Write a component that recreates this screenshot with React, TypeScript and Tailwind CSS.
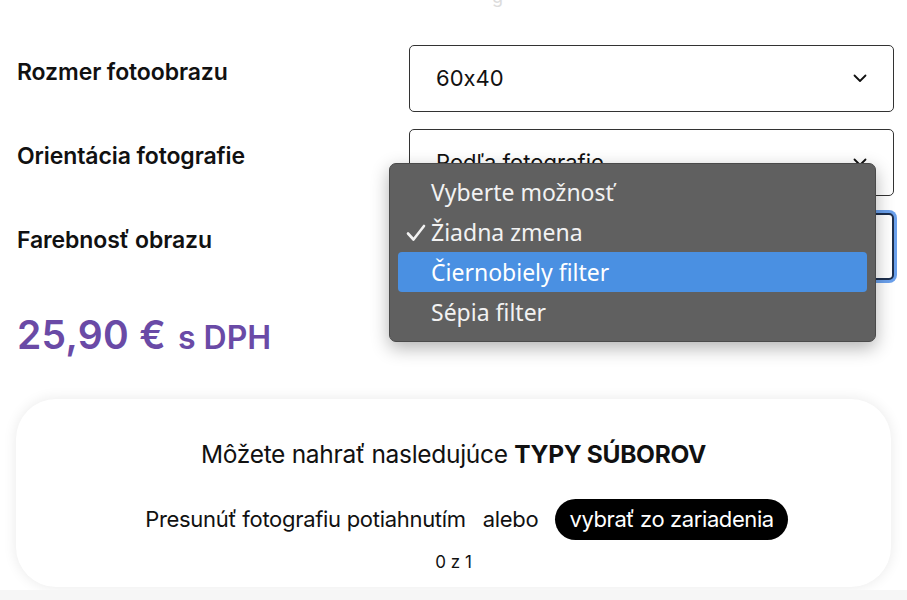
import React from 'react'

const font = { fontFamily: 'Inter, "Noto Sans", sans-serif' }

function Chevron() {
  return (
    <svg width="14" height="9" viewBox="0 0 14 9" fill="none" className="shrink-0">
      <path d="M1.5 1.5 7 7l5.5-5.5" stroke="#111" strokeWidth="1.8" strokeLinecap="round" strokeLinejoin="round" />
    </svg>
  )
}

function Field({ label, value, focused, children }: { label: string; value: string; focused?: boolean; children?: React.ReactNode }) {
  return (
    <div className="flex items-center h-[67px]">
      <div className="w-[392px] shrink-0 -mt-[12px] text-[23px] font-semibold text-[#111] tracking-[-0.1px]">{label}</div>
      <div className="relative w-[485px]">
        <div
          className={
            focused
              ? 'h-[67px] flex items-center justify-between rounded-[5px] border-2 border-[#1d2f4d] ring-[3px] ring-[#6aa0ec] px-[25px] bg-white'
              : 'h-[67px] flex items-center justify-between rounded-[5px] border border-[#333] px-[26px] bg-white'
          }
        >
          <span className="text-[22px] text-[#111] [font-feature-settings:'calt'_0]">{value}</span>
          <Chevron />
        </div>
        {children}
      </div>
    </div>
  )
}

const options = ['Vyberte možnosť', 'Žiadna zmena', 'Čiernobiely filter', 'Sépia filter']

function Menu() {
  return (
    <div
      className="absolute left-[-20px] top-[-50px] w-[487px] h-[179px] rounded-[7px] bg-[#606060] border border-[#4a4a4a] shadow-[0_6px_18px_rgba(0,0,0,0.3)] px-[8px] pt-[8px]"
      style={{ fontFamily: '"Noto Sans", Inter, sans-serif' }}
    >
      {options.map((o, i) => (
        <div
          key={o}
          className={
            i === 2
              ? 'relative h-[40px] flex items-center pl-[33px] rounded-[4px] bg-[#4a90e2] text-white text-[23px]'
              : 'relative h-[40px] flex items-center pl-[33px] text-[#f2f2f2] text-[23px]'
          }
        >
          {i === 1 && (
            <svg width="20" height="18" viewBox="0 0 20 18" className="absolute left-[8px] top-[12px]" fill="none">
              <path d="M2 9.5 7.5 15.5 18 2" stroke="#f2f2f2" strokeWidth="2.6" strokeLinecap="round" strokeLinejoin="round" />
            </svg>
          )}
          {o}
        </div>
      ))}
    </div>
  )
}

export default function App() {
  return (
    <div className="w-[907px] h-[600px] bg-white overflow-hidden relative" style={font}>
      <div className="absolute left-[492px] top-[-17px] text-[18px] text-[#dcdcdc]">g</div>
      <div className="pl-[17px] pt-[45px] flex flex-col gap-[17px]">
        <Field label="Rozmer fotoobrazu" value="60x40" />
        <Field label="Orientácia fotografie" value="Podľa fotografie" />
        <Field label="Farebnosť obrazu" value="Žiadna zmena" focused>
          <Menu />
        </Field>
      </div>
      <div className="pl-[17px] mt-[26px] flex items-baseline gap-[12px] text-[#6a4aa6] font-semibold">
        <span className="text-[39px] tracking-[0.3px]">25,90 €</span>
        <span className="text-[32px]">s DPH</span>
      </div>
      <div className="mx-[16px] mt-[34px] h-[188px] rounded-[40px] bg-white shadow-[0_0_14px_rgba(0,0,0,0.09)] flex flex-col items-center pt-[37px]">
        <div className="text-[24.5px] text-[#111] tracking-[-0.3px]">
          Môžete nahrať nasledujúce <span className="font-bold">TYPY SÚBOROV</span>
        </div>
        <div className="mt-[27px] ml-[26px] flex items-center text-[22px] text-[#111] tracking-[-0.3px]">
          <span>Presunúť fotografiu potiahnutím</span>
          <span className="ml-[17px]">alebo</span>
          <button className="ml-[17px] h-[41px] px-[14px] rounded-full bg-black text-white text-[22px] tracking-[-0.4px]">
            vybrať zo zariadenia
          </button>
        </div>
        <div className="mt-[10px] text-[17px] text-[#111]">0 z 1</div>
      </div>
      <div className="absolute left-0 right-0 top-[590px] h-[10px] bg-[#f6f6f6]" />
    </div>
  )
}
